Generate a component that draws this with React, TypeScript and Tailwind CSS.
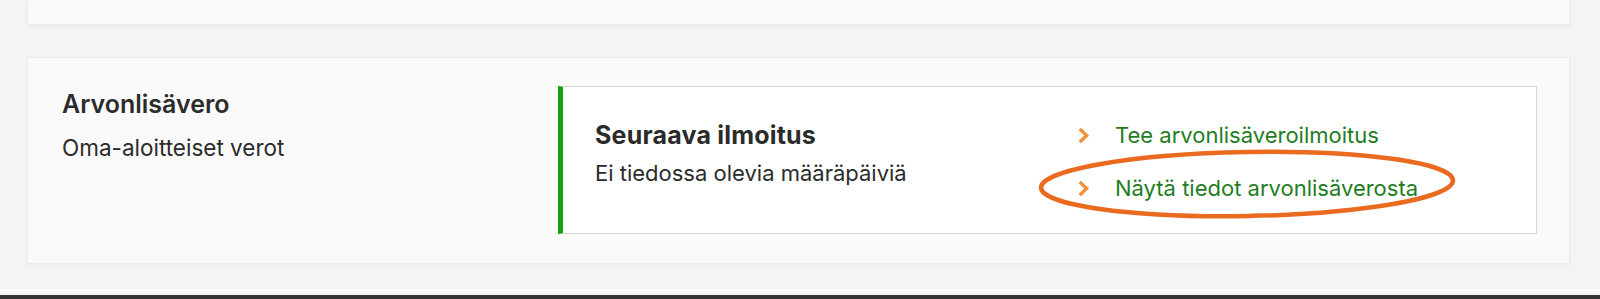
import React from "react";

function Chevron() {
  return (
    <svg width="13" height="17" viewBox="0 0 13 17" className="shrink-0">
      <path d="M2.8 2 L9.6 8.5 L2.8 15" fill="none" stroke="#f2913a" strokeWidth="3.4" strokeLinecap="butt" strokeLinejoin="miter" />
    </svg>
  );
}

export default function App() {
  return (
    <div
      className="relative w-[1600px] h-[299px] bg-[#f4f4f4] overflow-hidden flex flex-col"
      style={{ fontFamily: "Inter, 'Liberation Sans', sans-serif" }}
    >
      <div className="ml-[27px] mr-[30px] h-[25px] bg-[#fafafa] border-x border-b border-[#ececec] shadow-[0_2px_4px_rgba(0,0,0,0.04)]" />

      <div className="mt-[32px] ml-[27px] mr-[30px] h-[207px] bg-[#fafafa] border border-[#ececec] shadow-[0_1px_3px_rgba(0,0,0,0.04)] flex pt-[28px] pb-[29px] pr-[32px] pl-[34px]">
        <div className="w-[496px] shrink-0 pt-[3px] text-[#2b2b2b]">
          <div className="text-[25px] leading-[30px] font-semibold">Arvonlisävero</div>
          <div className="text-[22.5px] leading-[30px] mt-[14px]">Oma-aloitteiset verot</div>
        </div>

        <div className="flex-1 bg-white border border-[#d6d6d6] border-l-[5px] border-l-[#13a013] flex">
          <div className="w-[514px] shrink-0 pl-[32px] pt-[33px] text-[#2b2b2b]">
            <div className="text-[25px] leading-[30px] font-bold tracking-[0.2px]">Seuraava ilmoitus</div>
            <div className="text-[22px] leading-[30px] mt-[8px]">Ei tiedossa olevia määräpäiviä</div>
          </div>
          <div className="relative flex flex-col pt-[33px] gap-[23px]">
            <div className="flex items-center gap-[25px] text-[22px] leading-[30px] text-[#1f7d1f]">
              <Chevron />
              <span>Tee arvonlisäveroilmoitus</span>
            </div>
            <div className="flex items-center gap-[25px] text-[22px] leading-[30px] text-[#1f7d1f]">
              <Chevron />
              <span>Näytä tiedot arvonlisäverosta</span>
            </div>
          </div>
        </div>
      </div>

      <div className="mt-auto h-[2px] bg-[#fbfbfb] mb-[4px]" />
      <div className="h-[4px] bg-[#333333]" />

      <svg
        className="absolute left-[1034px] top-[146px] pointer-events-none"
        width="426"
        height="76"
        viewBox="0 0 426 76"
      >
        <ellipse cx="213" cy="38" rx="206" ry="32" fill="none" stroke="#ea6a1f" strokeWidth="4.5" transform="rotate(-1 213 38)" />
      </svg>
    </div>
  );
}
